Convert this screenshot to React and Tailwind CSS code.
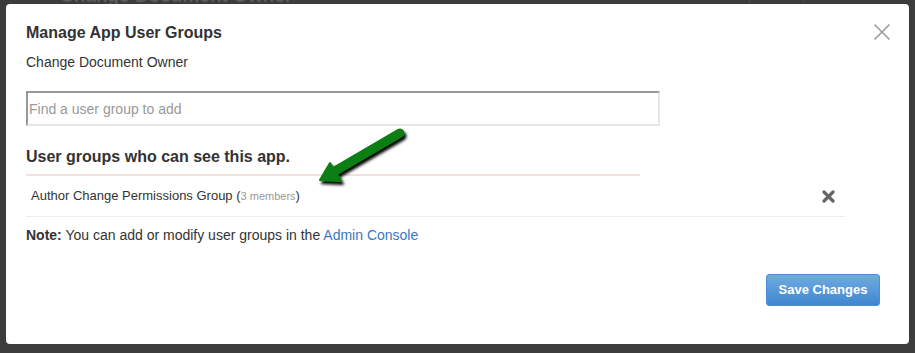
import React from 'react';

const GreenArrow = () => (
  <svg className="absolute left-[294px] top-[114px]" width="120" height="80" viewBox="0 0 120 80">
    <defs>
      <filter id="arrowShadow" x="-20%" y="-20%" width="150%" height="160%">
        <feGaussianBlur in="SourceAlpha" stdDeviation="1.6" />
        <feOffset dx="2" dy="3" result="blur" />
        <feMerge>
          <feMergeNode in="blur" />
          <feMergeNode in="SourceGraphic" />
        </feMerge>
      </filter>
    </defs>
    <g filter="url(#arrowShadow)">
      <line x1="100" y1="15" x2="35" y2="53" stroke="#0b7d12" strokeWidth="9" strokeLinecap="round" />
      <polygon points="20,62 30,45 41,63" fill="#0b7d12" stroke="#0b7d12" strokeWidth="2" strokeLinejoin="round" />
    </g>
  </svg>
);

export default function App() {
  return (
    <div className="w-[915px] h-[353px] bg-[#3c3c3c] overflow-hidden font-['Liberation_Sans',Arial,sans-serif]">
      {/* page behind the overlay, only its lower edge shows */}
      <div className="h-1 overflow-hidden relative">
        <div className="absolute left-[60px] top-[-12px] text-[19px] font-bold text-[#5a5a5a] leading-[16px]">Change Document Owner</div>
        <div className="absolute left-[749px] top-0 h-1 w-px bg-[#4a4a4a]" />
        <div className="absolute left-[803px] top-0 h-1 w-px bg-[#4a4a4a]" />
      </div>

      <div className="ml-[6px] w-[903px] h-[340px] bg-white rounded-[4px] relative px-5 pt-[18px]">
        {/* close */}
        <button className="absolute right-[18px] top-[19px] w-[18px] h-[18px]">
          <svg width="18" height="18" viewBox="0 0 18 18">
            <path d="M1.5 1.5 L16.5 16.5 M16.5 1.5 L1.5 16.5" stroke="#9a9a9a" strokeWidth="1.6" />
          </svg>
        </button>

        <h2 className="text-[16px] leading-[22px] font-bold text-[#333]">Manage App User Groups</h2>
        <p className="mt-2 text-[14px] leading-5 text-[#333]">Change Document Owner</p>

        <input
          className="mt-[19px] w-[634px] h-[35px] border-2 border-t-[#999] border-l-[#999] border-r-[#e6e6e6] border-b-[#e6e6e6] px-[1px] text-[14px] text-[#333] placeholder:text-[#999] outline-none"
          placeholder="Find a user group to add"
        />

        <h3 className="mt-5 w-[614px] pb-[6px] border-b-[2px] border-[#f2e2dc] text-[16px] leading-[22px] font-bold text-[#333]">
          User groups who can see this app.
        </h3>

        <div className="w-[819px] h-[41px] flex items-center justify-between pl-[5px] pr-[10px] border-b border-[#ececec] text-[13px] text-[#333]">
          <span>
            Author Change Permissions Group (<span className="text-[11px] text-[#999]">3 members</span>)
          </span>
          <svg width="13" height="13" viewBox="0 0 13 13">
            <path d="M2 2 L11 11 M11 2 L2 11" stroke="#666" strokeWidth="3.2" strokeLinecap="round" />
          </svg>
        </div>

        <p className="mt-[8px] text-[14px] leading-5 text-[#333]">
          <span className="font-bold">Note:</span> You can add or modify user groups in the{' '}
          <a className="text-[#3a78c3]">Admin Console</a>
        </p>

        <div className="mt-[29px] flex justify-end pr-[9px]">
          <button className="w-[114px] h-[32px] rounded-[3px] border border-[#4a8fd6] bg-gradient-to-b from-[#6fabe0] to-[#3f87d0] text-white text-[13px] font-bold">
            Save Changes
          </button>
        </div>

        <GreenArrow />
      </div>
    </div>
  );
}
